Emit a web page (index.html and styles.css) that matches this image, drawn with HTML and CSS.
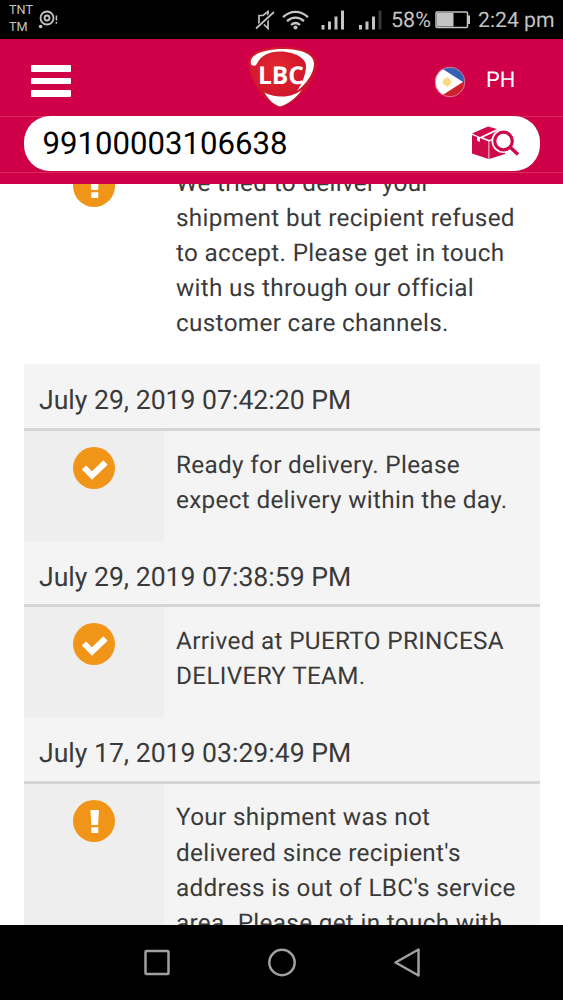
FILE: index.html
```html
<!DOCTYPE html>
<html lang="en">
<head>
<meta charset="utf-8">
<title>LBC Tracking</title>
<link rel="stylesheet" href="styles.css">
</head>
<body>
<svg width="0" height="0" class="defs">
  <symbol id="check" viewBox="0 0 42 42"><circle cx="21" cy="21" r="21" fill="#f09518"/><path d="M11 20.500 19 28.500 32.500 15.500" fill="none" stroke="#fff" stroke-width="6" stroke-linejoin="miter"/></symbol>
  <symbol id="alert" viewBox="0 0 42 42"><circle cx="21" cy="21" r="21" fill="#f09518"/><path d="M17.500 10h8.400l-.8 15h-6.800zM18.300 27.300h7v5.700h-7z" fill="#fff"/></symbol>
</svg>
<div class="screen">
  <div class="status">
    <div class="carrier"><span>TNT</span><span>TM</span></div>
    <svg class="notify" width="20" height="20" viewBox="0 0 20 20" fill="none" stroke="#c4c4c4"><circle cx="9" cy="8" r="6.500" stroke-width="1.800"/><circle cx="9" cy="8" r="2.500" stroke-width="1.800"/><circle cx="2.600" cy="16.500" r="1.800" fill="#c4c4c4" stroke="none"/><path d="M18.400 5.500v5M18.400 12v1.800" stroke-width="1.500"/></svg>
    <svg class="indicators" width="132" height="24" viewBox="0 0 132 24" fill="none" stroke="#c4c4c4">
      <path d="M4 7.500h4l5-4v17l-5-5H4z" stroke-width="1.700"/><path d="M1 21 19 4" stroke="#000" stroke-width="4"/><path d="M1 20.500 19 4" stroke-width="1.700"/>
      <g stroke-width="2.300" transform="translate(-1)"><path d="M29 9.200c7.500-7 17.500-7 25 0"/><path d="M33 13.200c5-4.700 12-4.700 17 0"/><path d="M37 17c3-2.700 6-2.700 9 0"/></g><circle cx="40.500" cy="19.500" r="2" fill="#c4c4c4" stroke="none"/>
      <g stroke-width="3" transform="translate(-1)"><path d="M69 17v4.500M75.500 13.500v8M82 8.500v13M88.500 2.500v19M106.500 17v4.500M113 13.500v8M119.500 8.500v13"/><path d="M126 2.500v19" stroke="#383838"/></g>
    </svg>
    <span class="percent">58%</span>
    <svg class="battery" width="36" height="18" viewBox="0 0 36 18"><rect x="1" y="1" width="31.500" height="15.500" rx="1" fill="none" stroke="#c4c4c4" stroke-width="1.500"/><path d="M2 2h16.500v13.500H2zM32.500 4.500h2.500v8.500h-2.500z" fill="#c4c4c4"/></svg>
    <span class="clock">2:24 pm</span>
  </div>
  <header class="header">
    <div class="topbar">
      <div class="menu"><i></i><i></i><i></i></div>
      <svg class="logo" width="74" height="66" viewBox="0 0 74 66">
        <defs><radialGradient id="red" cx=".4" cy=".35" r=".65"><stop offset="0" stop-color="#e3272f"/><stop offset="1" stop-color="#c80f2c"/></radialGradient></defs>
        <path d="M2.500 20C1 8 18 3 37 3s34 5 34 16c0 17-18 39-37 45C18 59 4 37 2.500 20z" fill="url(#red)"/>
        <path d="M4.700 18C5 9 22 5 37 5c18 0 31 5 31 14.500C68 30 60 40 51 47c5-7 9-17 9-25 0-8-12-14.500-26-14.500-11 0-19 4-23 12-2 4-6.500 2.500-6.300-1.500z" fill="#fff"/>
        <path d="M18.500 48.500c11 6 27 5.500 37-2.500-5 8-13 14-21.500 16.500C28 61 22 55 18.500 48.500z" fill="#fff"/>
        <text x="12" y="40" class="logo-text" textLength="46" lengthAdjust="spacingAndGlyphs">LBC</text>
      </svg>
      <div class="country">
        <svg width="32" height="32" viewBox="0 0 32 32"><defs><clipPath id="disc"><circle cx="16" cy="16" r="15"/></clipPath></defs><g clip-path="url(#disc)"><path d="M0 0h32v16H0z" fill="#3461b6"/><path d="M0 16h32v16H0z" fill="#cf202f"/><path d="M4 0 29 16 4 32H0V0z" fill="#fff"/><circle cx="13" cy="16" r="3.800" fill="#f8d16b"/><path d="M13 10.500v11M7.500 16h11M9 12l8 8M17 12l-8 8" stroke="#f8dc91" stroke-width="1"/></g><circle cx="16" cy="16" r="14.800" fill="none" stroke="#dc7890" stroke-width="1"/></svg>
        <span>PH</span>
      </div>
    </div>
    <div class="searchbar">
      <div class="search">
        <span>99100003106638</span>
        <svg width="50" height="36" viewBox="0 0 50 36"><path d="M1 8.500 17 1.500l9 2.500-17 8zM1 10l5 2v3.500l3 1.500v-4l8.500 3.500V34L1 28.500z" fill="#ce0a4b"/><path d="M12 12.500 28 5l5 2.500-14.500 7.500z" fill="#ce0a4b"/><path d="M18.300 16.500 34 9v20L18.300 34z" fill="#ce0a4b"/><circle cx="32.500" cy="16" r="12" fill="#fff"/><circle cx="32.500" cy="16" r="8.800" fill="none" stroke="#ce0a4b" stroke-width="3.200"/><path d="m39 22 8 7.500" stroke="#ce0a4b" stroke-width="3.500"/></svg>
      </div>
    </div>
  </header>
  <main class="history">
    <div class="timeline">
      <section class="event plain">
        <div class="detail"><div class="mark"><svg><use href="#alert"/></svg></div><p>We tried to deliver your<br>shipment but recipient refused<br>to accept. Please get in touch<br>with us through our official<br>customer care channels.</p></div>
      </section>
      <section class="event">
        <h2>July 29, 2019 07:42:20 PM</h2>
        <div class="detail"><div class="mark"><svg><use href="#check"/></svg></div><p>Ready for delivery. Please<br>expect delivery within the day.</p></div>
      </section>
      <section class="event">
        <h2>July 29, 2019 07:38:59 PM</h2>
        <div class="detail"><div class="mark"><svg><use href="#check"/></svg></div><p>Arrived at PUERTO PRINCESA<br>DELIVERY TEAM.</p></div>
      </section>
      <section class="event">
        <h2>July 17, 2019 03:29:49 PM</h2>
        <div class="detail"><div class="mark"><svg><use href="#alert"/></svg></div><p>Your shipment was not<br>delivered since recipient's<br>address is out of LBC's service<br>area. Please get in touch with</p></div>
      </section>
    </div>
  </main>
  <nav class="navbar">
    <svg width="28" height="30" viewBox="0 0 28 30"><rect x="3.500" y="3" width="23" height="23" rx="1" /></svg>
    <svg width="30" height="30" viewBox="0 0 30 30"><circle cx="15" cy="14.500" r="12.700"/></svg>
    <svg width="28" height="30" viewBox="0 0 28 30"><path d="M24.500 1.500v26L1.500 14.500z"/></svg>
  </nav>
</div>
</body>
</html>
```

FILE: styles.css
```css
* { box-sizing: border-box; }
body { margin: 0; background: #fff; font-family: Roboto, "Liberation Sans", sans-serif; text-rendering: geometricPrecision; }
.defs { display: block; height: 0; }
.screen { display: flex; flex-direction: column; width: 563px; height: 1000px; overflow: hidden; }
.status { display: flex; flex: none; height: 39px; padding-left: 9px; background: #000; color: #c4c4c4; white-space: nowrap; }
.carrier { display: flex; flex-direction: column; width: 29px; padding-top: 2px; font-size: 12.700px; line-height: 17px; }
.notify { margin-top: 10px; }
.indicators { margin: 8px 0 0 197px; }
.percent { width: 44px; margin-left: 4px; font-size: 21.5px; line-height: 42px; }
.battery { margin-top: 11px; }
.clock { margin-left: 7px; font-size: 21.200px; line-height: 42px; }
.header { flex: none; height: 145px; background: #cf0048; }
.topbar { display: flex; height: 77.500px; border-bottom: 1px solid #d72961; }
.menu { display: flex; flex-direction: column; gap: 6px; width: 39.500px; margin: 26px 0 0 31px; }
.menu i { height: 6.500px; border-radius: 1px; background: #fff; }
.logo { margin: 5px 0 0 175px; }
.logo-text { font: 700 24.500px "Open Sans", sans-serif; fill: #fff; }
.country { display: flex; margin: 27px 0 0 114px; color: #fff; font-size: 21.800px; line-height: 30px; }
.country span { margin-left: 20.500px; }
.searchbar { height: 57px; padding: 0 23px 0 23.500px; border-bottom: 1px solid #d72961; }
.search { display: flex; align-items: center; justify-content: space-between; height: 55px; margin-top: -1px; padding: 0 19px 0 19px; border-radius: 26px; background: #fff; color: #000; font-size: 31.150px; }
.search span { padding-top: 1px; }
.history { flex: 1; min-height: 0; overflow: hidden; padding: 0 23px 0 23.500px; background: #fff; }
.timeline { margin-top: -35px; }
.event { background: #f4f4f4; }
.plain { background: #fff; }
.event h2 { height: 66.700px; margin: 0; padding: 8px 0 0 15.500px; border-bottom: 3px solid #d5d5d5; color: #3a3a3a; font-size: 26.600px; font-weight: 400; line-height: 58px; white-space: nowrap; }
.detail { display: flex; }
.mark { width: 140.500px; flex: none; padding: 16px 0 0 49.500px; background: #eee; }
.plain .mark { background: #fff; }
.mark svg { display: block; width: 42px; height: 42px; }
.detail p { margin: 0; padding: 15.600px 0 23.700px 12px; color: #3a3a3a; font-size: 24.300px; line-height: 35.200px; letter-spacing: .32px; white-space: nowrap; }
.navbar { display: flex; justify-content: center; gap: 97px; flex: none; height: 75px; padding-top: 23px; background: #000; fill: none; stroke: #a0a0a0; stroke-width: 2.500; stroke-linejoin: round; }
```
